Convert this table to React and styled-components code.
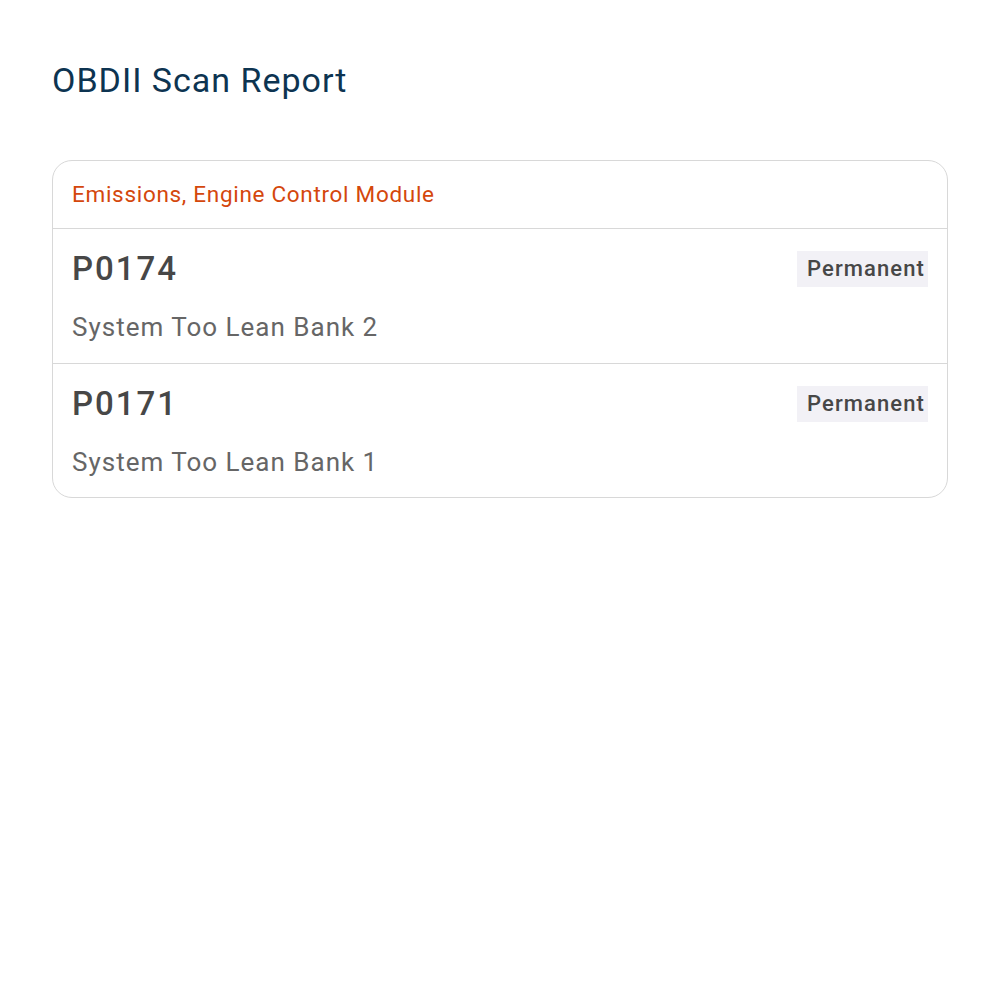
import React from 'react'
import styled, { createGlobalStyle } from 'styled-components'

const GlobalStyle = createGlobalStyle`
  body {
    margin: 0;
    background: #ffffff;
    font-family: Roboto, 'Noto Sans', sans-serif;
  }
`

const Page = styled.div`
  padding: 60px 52px;
`

const Title = styled.h1`
  margin: 0 0 60px;
  font-size: 34px;
  line-height: 40px;
  font-weight: 400;
  letter-spacing: 1px;
  color: #0d3451;
`

const Card = styled.div`
  border: 1px solid #d8d8d8;
  border-radius: 20px;
  overflow: hidden;
`

const CardHeader = styled.div`
  padding: 19px 19px 20px;
  font-size: 22.5px;
  line-height: 28px;
  letter-spacing: 0.7px;
  color: #d4470c;
  border-bottom: 1px solid #d8d8d8;
`

const Row = styled.div`
  padding: 20px 19px ${(props) => (props.last ? '19px' : '20px')};
  border-bottom: ${(props) => (props.last ? 'none' : '1px solid #d8d8d8')};
`

const RowTop = styled.div`
  display: flex;
  justify-content: space-between;
  align-items: center;
`

const Code = styled.span`
  font-size: 33px;
  line-height: 40px;
  font-weight: 500;
  letter-spacing: 2px;
  color: #474747;
`

const Badge = styled.span`
  background: #f2f1f6;
  color: #474747;
  font-size: 22px;
  line-height: 36px;
  font-weight: 500;
  letter-spacing: 1.1px;
  padding: 0 3px 0 10px;
`

const Description = styled.div`
  margin-top: 22px;
  font-size: 26px;
  line-height: 32px;
  letter-spacing: 1px;
  color: #666666;
`

const codes = [
  { code: 'P0174', status: 'Permanent', text: 'System Too Lean Bank 2' },
  { code: 'P0171', status: 'Permanent', text: 'System Too Lean Bank 1' },
]

const App = () => (
  <>
    <GlobalStyle />
    <Page>
      <Title>OBDII Scan Report</Title>
      <Card>
        <CardHeader>Emissions, Engine Control Module</CardHeader>
        {codes.map((item, i) => (
          <Row key={item.code} last={i === codes.length - 1}>
            <RowTop>
              <Code>{item.code}</Code>
              <Badge>{item.status}</Badge>
            </RowTop>
            <Description>{item.text}</Description>
          </Row>
        ))}
      </Card>
    </Page>
  </>
)

export default App
